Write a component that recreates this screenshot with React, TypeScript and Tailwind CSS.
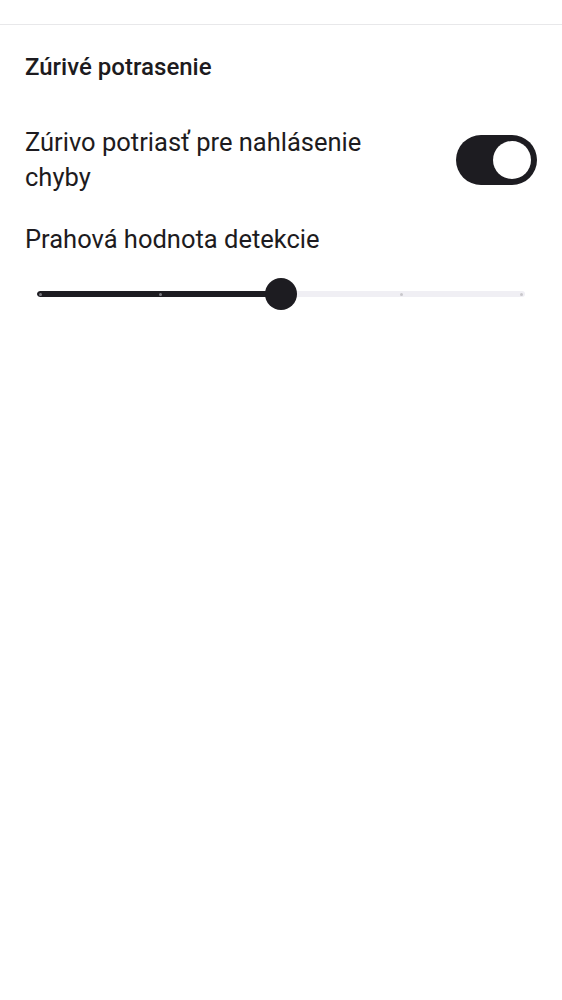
import React, { useState } from 'react';

// Pantalla de ajustes: sacudida para reportar errores
const ShakeSettings: React.FC = () => {
  const [enabled, setEnabled] = useState(true);
  const [value] = useState(2);
  const steps = [0, 1, 2, 3, 4];
  const pct = (value / (steps.length - 1)) * 100;

  return (
    <div className="min-h-screen bg-white text-[#1d1b20]" style={{ fontFamily: 'Roboto, "Noto Sans", sans-serif' }}>
      {/* barra superior */}
      <div className="h-[25px] border-b border-[#e8e8ea]" />

      <div className="flex flex-col px-[25px]">
        <h2 className="pt-[27px] font-['Roboto_Medium',Roboto,sans-serif] text-[24px] font-normal leading-[30px]">Zúrivé potrasenie</h2>

        {/* interruptor */}
        <div className="mt-[43px] flex items-center justify-between">
          <p className="w-[390px] text-[25.5px] leading-[35px]">Zúrivo potriasť pre nahlásenie chyby</p>
          <button
            onClick={() => setEnabled(!enabled)}
            className={`flex h-[50px] w-[81px] items-center rounded-full px-[6px] ${enabled ? 'justify-end bg-[#1d1c21]' : 'justify-start bg-[#e6e1e5]'}`}
          >
            <span className="block h-[38px] w-[38px] rounded-full bg-white" />
          </button>
        </div>

        {/* deslizador */}
        <p className="mt-[27px] text-[25.5px] leading-[35px]">Prahová hodnota detekcie</p>
        <div className="relative mx-[12px] mt-[21px] flex h-[32px] items-center">
          <div className="flex h-[6px] flex-1 overflow-hidden rounded-full bg-[#f0eff4]">
            <div className="h-full rounded-full bg-[#1d1c21]" style={{ width: `${pct}%` }} />
          </div>
          <div className="absolute inset-x-[2px] flex items-center justify-between">
            {steps.map((s) => (
              <span key={s} className={`h-[3px] w-[3px] rounded-full ${s <= value ? 'bg-[#7a7a80]' : 'bg-[#c8c7cc]'}`} />
            ))}
          </div>
          <span className="absolute h-[32px] w-[32px] -translate-x-1/2 rounded-full bg-[#1d1c21]" style={{ left: `${pct}%` }} />
        </div>
      </div>
    </div>
  );
};

export default function App() {
  return <ShakeSettings />;
}
